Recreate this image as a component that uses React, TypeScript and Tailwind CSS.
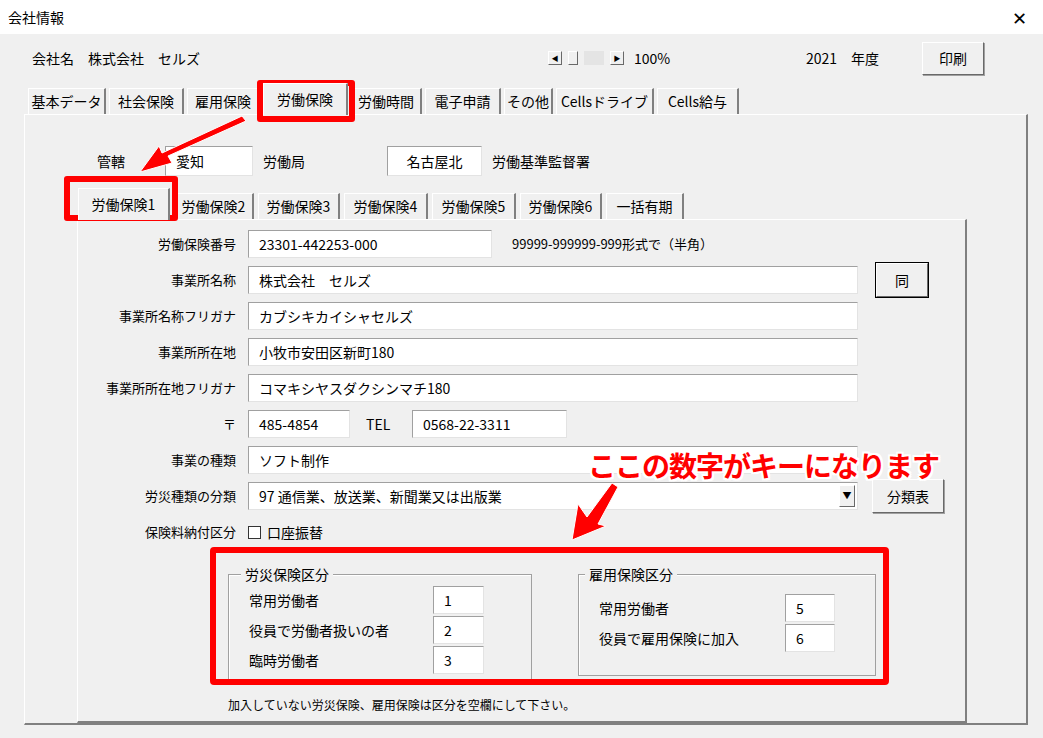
const font = { fontFamily: '"Noto Sans CJK JP", "Liberation Sans", sans-serif' }

function Input({ w, value, className = "" }: { w: string; value: string; className?: string }) {
  return (
    <div
      className={`${w} h-[28px] bg-white border border-t-[#a0a0a0] border-l-[#a0a0a0] border-b-[#e3e3e3] border-r-[#e3e3e3] flex items-center px-[10px] text-[14px] text-black whitespace-nowrap ${className}`}
    >
      {value}
    </div>
  )
}

function Btn({ label, className = "" }: { label: string; className?: string }) {
  return (
    <div
      className={`bg-[#f0f0f0] border border-t-white border-l-white border-b-[#696969] border-r-[#696969] shadow-[1px_1px_0_#a0a0a0] flex items-center justify-center text-[14px] ${className}`}
    >
      {label}
    </div>
  )
}

function Tab({ label, w, active = false }: { label: string; w: string; active?: boolean }) {
  return (
    <div
      className={`${w} ${active ? "h-[32px] -mb-px z-10 bg-[#f0f0f0]" : "h-[26px]"} flex items-center justify-center border-t border-l border-white border-r-2 border-r-[#808080] text-[14px] whitespace-nowrap`}
    >
      {label}
    </div>
  )
}

function Row({ label, children }: { label: string; children: React.ReactNode }) {
  return (
    <div className="flex items-center h-[28px]">
      <div className="w-[170px] pr-[12px] text-right text-[13px] whitespace-nowrap">{label}</div>
      {children}
    </div>
  )
}

export default function App() {
  return (
    <div style={font} className="w-[1043px] h-[738px] bg-[#f0f0f0] text-black relative overflow-hidden">
      <div className="h-[34px] bg-white flex items-center justify-between px-[8px] text-[14px]">
        <span>会社情報</span>
        <span className="text-[18px] font-thin mr-[8px]">✕</span>
      </div>

      <div className="flex items-center h-[48px] pl-[32px] text-[14px]">
        <span className="w-[516px]">会社名　株式会社　セルズ</span>
        <div className="flex items-center gap-[6px]">
          <div className="w-[14px] h-[14px] border border-t-white border-l-white border-b-[#696969] border-r-[#696969] text-[7px] flex items-center justify-center">◀</div>
          <div className="w-[10px] h-[14px] border border-t-white border-l-white border-b-[#696969] border-r-[#696969]" />
          <div className="w-[20px] h-[14px] bg-[#e4e4e4]" />
          <div className="w-[14px] h-[14px] border border-t-white border-l-white border-b-[#696969] border-r-[#696969] text-[7px] flex items-center justify-center">▶</div>
        </div>
        <span className="ml-[10px] w-[172px]">100%</span>
        <span className="w-[116px]">2021　年度</span>
        <Btn label="印刷" className="w-[62px] h-[33px]" />
      </div>

      <div className="flex items-end pl-[28px] gap-[3px] h-[32px]">
        <Tab label="基本データ" w="w-[78px]" />
        <Tab label="社会保険" w="w-[75px]" />
        <Tab label="雇用保険" w="w-[73px]" />
        <Tab label="労働保険" w="w-[85px]" active />
        <Tab label="労働時間" w="w-[71px]" />
        <Tab label="電子申請" w="w-[76px]" />
        <Tab label="その他" w="w-[49px]" />
        <Tab label="Cellsドライブ" w="w-[98px]" />
        <Tab label="Cells給与" w="w-[82px]" />
      </div>

      <div className="ml-[24px] w-[1004px] h-[611px] border-t border-l border-white border-r-2 border-b-2 border-r-[#808080] border-b-[#808080]">
        <div className="flex items-center h-[30px] mt-[31px] text-[14px]">
          <span className="ml-[72px] w-[68px]">管轄</span>
          <Input w="w-[88px] h-[30px]" value="愛知" />
          <span className="ml-[10px] w-[124px]">労働局</span>
          <Input w="w-[95px] h-[30px]" value="名古屋北" className="justify-center" />
          <span className="ml-[10px]">労働基準監督署</span>
        </div>

        <div className="flex items-end pl-[53px] gap-[4px] h-[37px] mt-[6px]">
          <Tab label="労働保険1" w="w-[92px]" active />
          <Tab label="労働保険2" w="w-[80px]" />
          <Tab label="労働保険3" w="w-[82px]" />
          <Tab label="労働保険4" w="w-[84px]" />
          <Tab label="労働保険5" w="w-[84px]" />
          <Tab label="労働保険6" w="w-[82px]" />
          <Tab label="一括有期" w="w-[78px]" />
        </div>

        <div className="ml-[52px] w-[890px] h-[504px] border-t border-l border-white border-r-2 border-r-[#808080] border-b-2 border-b-[#808080] pt-[10px] flex flex-col gap-[8px] text-[14px]">
          <Row label="労働保険番号">
            <Input w="w-[244px]" value="23301-442253-000" />
            <span className="ml-[20px] text-[13px]">99999-999999-999形式で（半角）</span>
          </Row>
          <Row label="事業所名称">
            <Input w="w-[610px]" value="株式会社　セルズ" />
            <Btn label="同" className="ml-[18px] w-[52px] h-[34px] outline outline-1 outline-black" />
          </Row>
          <Row label="事業所名称フリガナ"><Input w="w-[610px]" value="カブシキカイシャセルズ" /></Row>
          <Row label="事業所所在地"><Input w="w-[610px]" value="小牧市安田区新町180" /></Row>
          <Row label="事業所所在地フリガナ"><Input w="w-[610px]" value="コマキシヤスダクシンマチ180" /></Row>
          <Row label="〒">
            <Input w="w-[102px]" value="485-4854" />
            <span className="ml-[16px] w-[46px]">TEL</span>
            <Input w="w-[155px]" value="0568-22-3311" />
          </Row>
          <Row label="事業の種類"><Input w="w-[610px]" value="ソフト制作" /></Row>
          <Row label="労災種類の分類">
            <div className="w-[610px] h-[28px] bg-white border border-t-[#a0a0a0] border-l-[#a0a0a0] border-b-[#e3e3e3] border-r-[#e3e3e3] flex items-center pl-[10px] pr-[2px]">
              <span className="flex-1">97 通信業、放送業、新聞業又は出版業</span>
              <div className="w-[16px] h-[22px] bg-[#f0f0f0] border border-t-white border-l-white border-b-[#696969] border-r-[#696969] text-[9px] flex items-center justify-center">▼</div>
            </div>
            <Btn label="分類表" className="ml-[14px] w-[72px] h-[34px]" />
          </Row>
          <Row label="保険料納付区分">
            <div className="w-[13px] h-[13px] bg-white border border-[#333]" />
            <span className="ml-[6px]">口座振替</span>
          </Row>

          <div className="flex ml-[150px] mt-[20px] gap-[46px]">
            <div className="relative w-[304px] h-[110px] border border-[#a0a0a0] shadow-[inset_1px_1px_0_white] pt-[10px] pl-[20px]">
              <span className="absolute -top-[11px] left-[12px] px-[4px] bg-[#f0f0f0]">労災保険区分</span>
              {[["常用労働者", "1"], ["役員で労働者扱いの者", "2"], ["臨時労働者", "3"]].map(([l, v]) => (
                <div key={v} className="flex items-center h-[30px]">
                  <span className="w-[184px]">{l}</span>
                  <Input w="w-[51px]" value={v} />
                </div>
              ))}
            </div>
            <div className="relative w-[298px] h-[102px] border border-[#a0a0a0] shadow-[inset_1px_1px_0_white] pt-[18px] pl-[20px]">
              <span className="absolute -top-[11px] left-[6px] px-[4px] bg-[#f0f0f0]">雇用保険区分</span>
              {[["常用労働者", "5"], ["役員で雇用保険に加入", "6"]].map(([l, v]) => (
                <div key={v} className="flex items-center h-[30px]">
                  <span className="w-[186px]">{l}</span>
                  <Input w="w-[50px]" value={v} />
                </div>
              ))}
            </div>
          </div>
          <div className="ml-[150px] mt-[4px] text-[12px]">加入していない労災保険、雇用保険は区分を空欄にして下さい。</div>
        </div>
      </div>

      {/* annotations */}
      <div className="absolute left-[257px] top-[80px] w-[98px] h-[42px] border-[6px] border-[#f00] rounded-[3px]" />
      <div className="absolute left-[64px] top-[176px] w-[114px] h-[45px] border-[6px] border-[#f00] rounded-[3px]" />
      <div className="absolute left-[210px] top-[547px] w-[679px] h-[138px] border-[6px] border-[#f00] rounded-[4px]" />
      <div
        className="absolute left-[588px] top-[444px] text-[28px] font-bold text-[#f00] tracking-[-1px]"
        style={{ textShadow: "2px 0 #fff,-2px 0 #fff,0 2px #fff,0 -2px #fff,2px 2px #fff,-2px -2px #fff,2px -2px #fff,-2px 2px #fff" }}
      >
        ここの数字がキーになります
      </div>
      <svg className="absolute left-0 top-0" width="1043" height="738">
        <path d="M246 121 L168 156 L172 163 L140 172 L159 146 L162 153 L242 116 Z" fill="#f00" stroke="#fff" strokeWidth="1" />
        <path d="M618 487 L598 524 L606 526 L572 540 L578 504 L587 517 L612 483 Z" fill="#f00" stroke="#fff" strokeWidth="1" />
      </svg>
    </div>
  )
}
